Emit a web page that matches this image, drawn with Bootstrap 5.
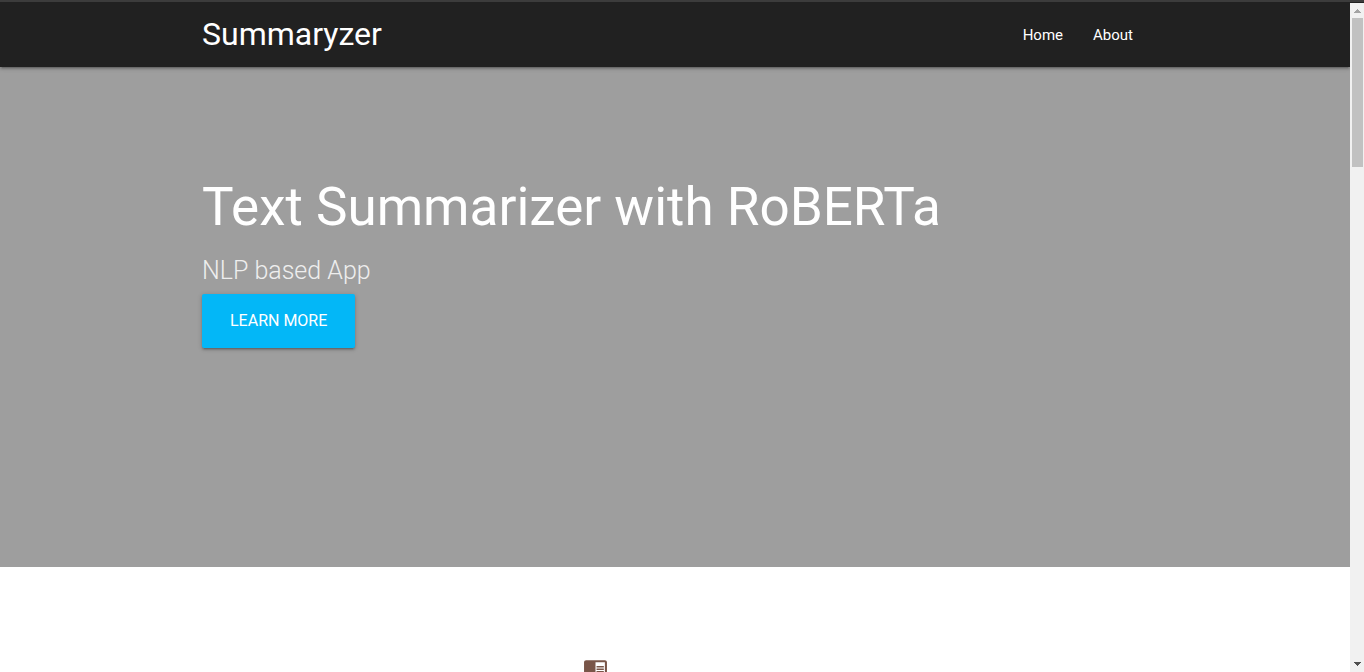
<!DOCTYPE html>
<html lang="en">
<head>
<meta charset="utf-8">
<meta name="viewport" content="width=device-width, initial-scale=1">
<title>Summaryzer</title>
<link href="https://cdn.jsdelivr.net/npm/bootstrap@5.3.0/dist/css/bootstrap.min.css" rel="stylesheet">
<style>
  body { font-family: Roboto, sans-serif; font-size: 15px; }
  .window-edge { height: 3px; background: #3c3c3c; border-bottom: 1px solid #212121; }
  .viewport { min-height: 0; }
  .page { min-width: 0; }
  .wrap { width: calc(70% + 1px); margin: 0 auto; }
  .topbar { height: 64px; background: #212121; z-index: 2;
    box-shadow: 0 2px 2px 0 rgba(0,0,0,.14), 0 3px 1px -2px rgba(0,0,0,.12), 0 1px 5px 0 rgba(0,0,0,.2); }
  .brand { font-size: 32px; line-height: 62px; }
  .menu a { line-height: 64px; padding: 0 15px; color: #fff; }
  .hero { min-height: 500px; background: #9e9e9e; padding-top: 110px; }
  .hero h1 { font-size: 53px; line-height: 60px; margin-bottom: 18px; }
  .hero h2 { font-size: 25px; line-height: 32px; font-weight: 300; color: #eee; margin-bottom: 7px; }
  .btn-learn { height: 54px; padding: 0 28px; font-size: 16px; color: #fff; background: #03b7f7; border: 0; border-radius: 2px;
    box-shadow: 0 2px 2px 0 rgba(0,0,0,.14), 0 3px 1px -2px rgba(0,0,0,.12), 0 1px 5px 0 rgba(0,0,0,.2); }
  .btn-learn:hover { color: #fff; background: #29c1f8; }
  .features { padding-top: 89px; }
  .feature { width: 184px; color: #795548; }
  .scroller { width: 14px; background: #f1f1f1; }
  .thumb { height: 149px; width: 11px; background: #c1c1c1; }
  .scroller svg { display: block; width: 14px; height: 15px; flex: none; }
</style>
</head>
<body class="vh-100 overflow-hidden d-flex flex-column bg-white">
<div class="window-edge flex-shrink-0"></div>
<div class="viewport d-flex flex-fill">
  <div class="page flex-fill overflow-hidden">
    <nav class="topbar position-relative">
      <div class="wrap d-flex justify-content-between">
        <a class="brand text-white text-decoration-none" href="#">Summaryzer</a>
        <div class="menu d-flex">
          <a class="text-decoration-none" href="#">Home</a>
          <a class="text-decoration-none" href="#about">About</a>
        </div>
      </div>
    </nav>
    <header class="hero">
      <div class="wrap">
        <h1 class="fw-normal text-white">Text Summarizer with RoBERTa</h1>
        <h2>NLP based App</h2>
        <button type="button" class="btn btn-learn text-uppercase">Learn more</button>
      </div>
    </header>
    <section class="features" id="about">
      <div class="wrap">
        <div class="feature mx-auto">
          <svg class="d-block" width="25" height="25" viewBox="0 0 24 24" fill="currentColor" aria-hidden="true"><path d="M13 12h7v1.5h-7zm0-2.5h7V11h-7zm0 5h7V16h-7zM21 4H3c-1.1 0-2 .9-2 2v13c0 1.1.9 2 2 2h18c1.1 0 2-.9 2-2V6c0-1.1-.9-2-2-2zm0 15h-9V6h9v13z"/></svg>
        </div>
      </div>
    </section>
  </div>
  <div class="scroller d-flex flex-column align-items-center flex-shrink-0" aria-hidden="true">
    <svg viewBox="0 0 14 15" fill="#a3a3a3" shape-rendering="crispEdges"><path d="M7 6h1v1h1v1h1v1h1v1H4V9h1V8h1V7h1z"/></svg>
    <div class="thumb"></div>
    <svg class="mt-auto" viewBox="0 0 14 15" fill="#505050" shape-rendering="crispEdges"><path d="M4 5h7v1h-1v1H9v1H8v1H7V8H6V7H5V6H4z"/></svg>
  </div>
</div>
<script src="https://cdn.jsdelivr.net/npm/bootstrap@5.3.0/dist/js/bootstrap.bundle.min.js"></script>
</body>
</html>
